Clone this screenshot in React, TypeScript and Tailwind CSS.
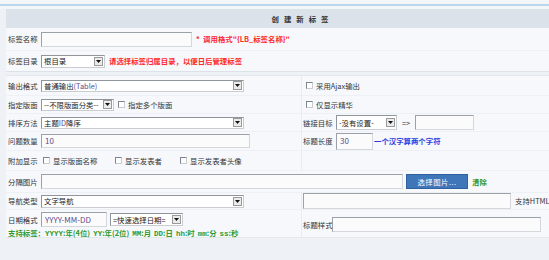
import React from "react";

function Checkbox() {
  return (
    <span className="inline-block w-[7px] h-[7px] shrink-0 border border-t-[#7d848c] border-l-[#7d848c] border-r-[#c8cdd2] border-b-[#c8cdd2] bg-white" />
  );
}

function TextInput({ w, h = 15, children }: { w: number; h?: number; children?: React.ReactNode }) {
  return (
    <div
      className="flex items-center shrink-0 pl-[3px] bg-[#fbfbfb] border border-t-[#9aa1a9] border-l-[#9aa1a9] border-r-[#d4d8dc] border-b-[#d4d8dc] text-[#5a4a8e] text-[8px] whitespace-nowrap"
      style={{ width: w, height: h }}
    >
      {children}
    </div>
  );
}

function Select({ w, h = 12, children }: { w: number; h?: number; children?: React.ReactNode }) {
  return (
    <div
      className="flex items-center shrink-0 bg-white border border-t-[#8e959c] border-l-[#8e959c] border-r-[#c9cdd1] border-b-[#c9cdd1]"
      style={{ width: w, height: h }}
    >
      <span className="flex-1 pl-[2px] whitespace-nowrap leading-[10px] text-[#222]">{children}</span>
      <span className="w-[9px] h-[9px] mr-[1px] shrink-0 flex items-center justify-center bg-[#ebebeb] border border-[#9a9a9a]">
        <svg width="5" height="3" viewBox="0 0 5 3">
          <path d="M0 0h5L2.5 3z" fill="#111" />
        </svg>
      </span>
    </div>
  );
}

function Label({ children }: { children: React.ReactNode }) {
  return <span className="w-[33px] shrink-0 whitespace-nowrap">{children}</span>;
}

function Row({ h, left, right }: { h: number; left: React.ReactNode; right?: React.ReactNode }) {
  return (
    <div className="flex border-b border-[#edf1f5]" style={{ height: h }}>
      <div className="w-[295px] shrink-0 flex items-center pl-[2px]">{left}</div>
      <div className="flex-1 flex items-center pl-[1px] border-l border-[#e8ecf1]">{right}</div>
    </div>
  );
}

const mono = "font-['Liberation_Mono',monospace] text-[7.5px]";

export default function App() {
  return (
    <div className="w-[549px] h-[260px] overflow-hidden bg-[#eef2f6] text-[7.4px] leading-none text-[#333] font-['Noto_Sans_CJK_SC','Liberation_Sans',sans-serif]">
      <div className="h-[4px] bg-[#f3f6f9]" />
      <div className="h-[2px] bg-[#b9d6ec]" />
      <div className="h-[3px] bg-[#f3f6f9]" />

      {/* Section 1 */}
      <div className="ml-[6px] w-[588px] bg-[#f6f8fb] border-b border-[#dde2e8]">
        <div className="h-[19px] bg-[#dbe2e9] flex items-center justify-center pl-[5px]">
          <span className="font-bold tracking-[5px] text-[#333]">创建新标签</span>
        </div>
        <div className="h-[23px] flex items-center pl-[2px] border-b border-[#edf1f5]">
          <Label>标签名称</Label>
          <TextInput w={151} />
          <span className="ml-[4px] text-[#ff2a2a] font-bold whitespace-nowrap">* &nbsp;调用格式"{"{LB_标签名称}"}"</span>
        </div>
        <div className="h-[20px] flex items-center pl-[2px]">
          <Label>标签目录</Label>
          <Select w={64} h={13}>根目录</Select>
          <span className="ml-[4px] text-[#ff2a2a] font-bold whitespace-nowrap">请选择标签归属目录，以便日后管理标签</span>
        </div>
      </div>

      {/* Section 2 */}
      <div className="ml-[6px] mt-[3px] w-[588px] bg-[#f6f8fb] border-t border-[#e4e8ed]">
        <Row
          h={20}
          left={
            <>
              <Label>输出格式</Label>
              <Select w={203}>
                普通输出<span className="text-[#5a4a8e]">(Table)</span>
              </Select>
            </>
          }
          right={
            <span className="flex items-center gap-[3px] pl-[3px]">
              <Checkbox />
              采用Ajax输出
            </span>
          }
        />
        <Row
          h={18}
          left={
            <>
              <Label>指定版面</Label>
              <Select w={73}>--不限版面分类--</Select>
              <span className="ml-[4px] flex items-center gap-[3px]">
                <Checkbox />
                指定多个版面
              </span>
            </>
          }
          right={
            <span className="flex items-center gap-[3px] pl-[3px]">
              <Checkbox />
              仅显示精华
            </span>
          }
        />
        <Row
          h={18}
          left={
            <>
              <Label>排序方法</Label>
              <Select w={203}>
                主题<span className="text-[#5a4a8e]">ID</span>降序
              </Select>
            </>
          }
          right={
            <>
              <Label>链接目标</Label>
              <Select w={61} h={15}>-没有设置-</Select>
              <span className="w-[18px] text-center">=&gt;</span>
              <TextInput w={59} />
            </>
          }
        />
        <Row
          h={19}
          left={
            <>
              <Label>问题数量</Label>
              <TextInput w={209} h={14}>10</TextInput>
            </>
          }
          right={
            <>
              <Label>标题长度</Label>
              <TextInput w={37} h={17}>30</TextInput>
              <span className="ml-[1px] text-[#2b3be0] font-bold whitespace-nowrap">一个汉字算两个字符</span>
            </>
          }
        />
        <Row
          h={20}
          left={
            <>
              <Label>附加显示</Label>
              <span className="ml-[2px] w-[72px] flex items-center gap-[3px]">
                <Checkbox />
                显示版面名称
              </span>
              <span className="w-[65px] flex items-center gap-[3px]">
                <Checkbox />
                显示发表者
              </span>
              <span className="flex items-center gap-[3px]">
                <Checkbox />
                显示发表者头像
              </span>
            </>
          }
        />
        <div className="h-[22px] flex items-center pl-[2px] border-b border-[#edf1f5]">
          <Label>分隔图片</Label>
          <TextInput w={362} />
          <button className="ml-[3px] w-[62px] h-[15px] bg-[#3f76ba] border border-[#2f60a0] text-white text-[7.4px] tracking-[0.5px]">
            选择图片...
          </button>
          <span className="ml-[4px] text-[#2f9a2f] font-bold">清除</span>
        </div>
        <Row
          h={17}
          left={
            <>
              <Label>导航类型</Label>
              <Select w={203} h={13}>文字导航</Select>
            </>
          }
          right={
            <>
              <TextInput w={208} h={16} />
              <span className="ml-[4px] whitespace-nowrap">支持HTML语</span>
            </>
          }
        />
        <div className="flex h-[28px] border-b border-[#e4e8ed]">
          <div className="w-[295px] shrink-0 pl-[2px] pt-[2px]">
            <div className="flex items-center">
              <Label>日期格式</Label>
              <TextInput w={66}>YYYY-MM-DD</TextInput>
              <span className="ml-[3px]">
                <Select w={73} h={13}>=快速选择日期=</Select>
              </span>
            </div>
            <div className="mt-[2px] text-[#2f9a2f] font-bold whitespace-nowrap flex gap-[3px]">
              <span>支持标签：<span className={mono}>YYYY</span>:年(4位)</span>
              <span><span className={mono}>YY</span>:年(2位)</span>
              <span><span className={mono}>MM</span>:月</span>
              <span><span className={mono}>DD</span>:日</span>
              <span><span className={mono}>hh</span>:时</span>
              <span><span className={mono}>mm</span>:分</span>
              <span><span className={mono}>ss</span>:秒</span>
            </div>
          </div>
          <div className="flex-1 flex items-center pl-[1px] pt-[2px] border-l border-[#e8ecf1]">
            <span className="w-[29px] shrink-0 whitespace-nowrap">标题样式</span>
            <TextInput w={209} />
          </div>
        </div>
      </div>
    </div>
  );
}
